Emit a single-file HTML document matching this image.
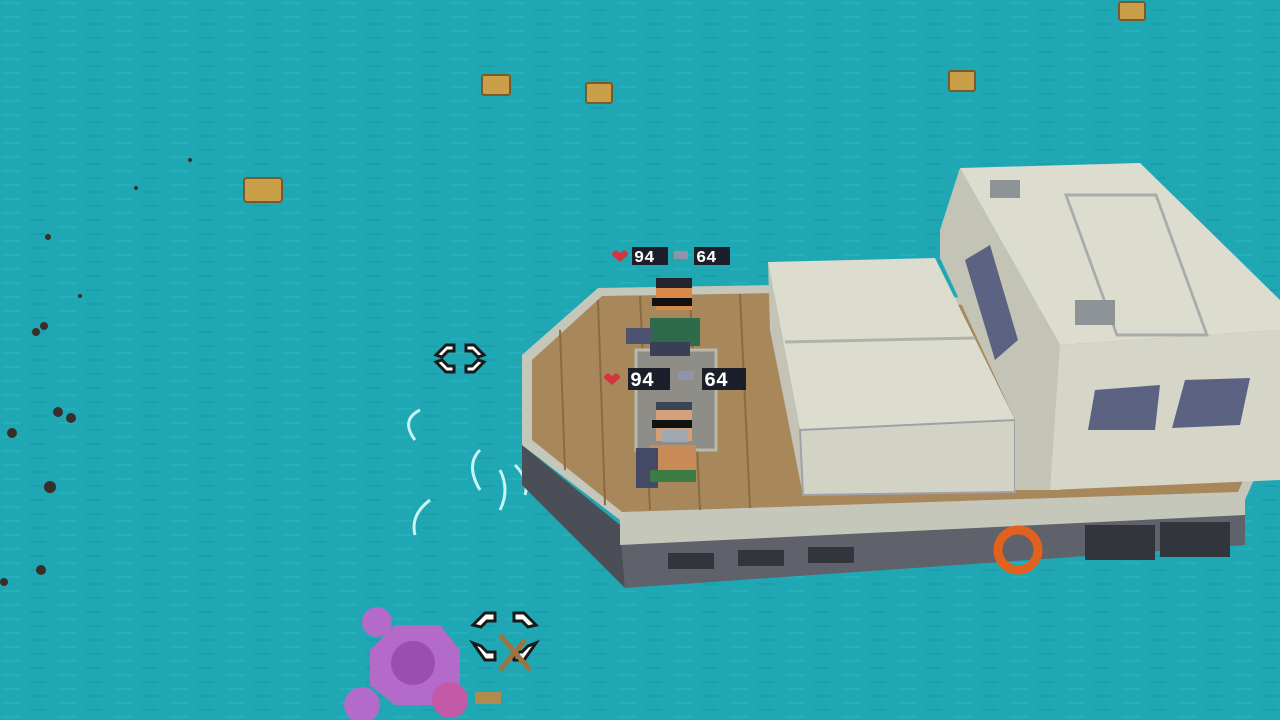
<!DOCTYPE html>
<html><head><meta charset="utf-8"><style>
html,body{margin:0;padding:0;width:1280px;height:720px;overflow:hidden;background:#1ea7b3}
svg{display:block}
text{font-family:"Liberation Mono",monospace;font-weight:bold}
</style></head><body>
<svg width="1280" height="720" viewBox="0 0 1280 720" xmlns="http://www.w3.org/2000/svg">
<defs>
<pattern id="w" width="56" height="14" patternUnits="userSpaceOnUse">
<rect width="56" height="14" fill="#1fa8b4"/>
<rect x="2" y="2" width="18" height="2" fill="#24afba"/>
<rect x="30" y="9" width="16" height="2" fill="#1b9fad"/>
</pattern>
</defs>
<rect width="1280" height="720" fill="url(#w)"/>
<g fill="#c9a049" stroke="#7a5a2a" stroke-width="2">
<rect x="244" y="178" width="38" height="24" rx="3"/>
<rect x="482" y="75" width="28" height="20" rx="2"/>
<rect x="586" y="83" width="26" height="20" rx="2"/>
<rect x="949" y="71" width="26" height="20" rx="2"/>
<rect x="1119" y="2" width="26" height="18" rx="2"/>
</g>
<g fill="#3a2e2a">
<circle cx="12" cy="433" r="5"/><circle cx="50" cy="487" r="6"/><circle cx="41" cy="570" r="5"/><circle cx="4" cy="582" r="4"/>
<circle cx="58" cy="412" r="5"/><circle cx="71" cy="418" r="5"/><circle cx="36" cy="332" r="4"/><circle cx="44" cy="326" r="4"/>
<circle cx="48" cy="237" r="3"/><circle cx="80" cy="296" r="2"/><circle cx="190" cy="160" r="2"/><circle cx="136" cy="188" r="2"/>
</g>
<g fill="none" stroke="#c8f4f6" stroke-width="3">
<path d="M420 410 q-20 10 -5 30"/><path d="M480 450 q-15 15 0 40"/><path d="M430 500 q-20 15 -15 35"/>
<path d="M500 470 q10 20 0 40"/><path d="M515 465 q15 15 10 30"/>
</g>
<polygon points="522,445 620,525 625,588 522,485" fill="#4c4e57"/>
<polygon points="620,525 1245,500 1245,545 625,588" fill="#5f616b"/>
<polygon points="620,518 1245,495 1245,515 620,545" fill="#c6c7bb"/>
<g fill="#33353d"><rect x="668" y="553" width="46" height="16"/><rect x="738" y="550" width="46" height="16"/><rect x="808" y="547" width="46" height="16"/>
<rect x="1085" y="525" width="70" height="35"/><rect x="1160" y="522" width="70" height="35"/></g>
<circle cx="1018" cy="550" r="20" fill="none" stroke="#e0621e" stroke-width="9"/>
<polygon points="522,355 598,288 780,285 1280,320 1280,420 1245,500 620,520 522,445" fill="#c6c7bb"/>
<polygon points="532,360 602,296 780,293 1272,325 1272,415 1238,492 622,512 532,440" fill="#a8875a"/>
<g stroke="#8a6a42" stroke-width="2"><line x1="560" y1="330" x2="565" y2="470"/><line x1="598" y1="300" x2="605" y2="505"/><line x1="640" y1="296" x2="650" y2="510"/><line x1="690" y1="295" x2="700" y2="510"/><line x1="740" y1="294" x2="750" y2="508"/></g>
<rect x="636" y="350" width="80" height="100" fill="#8e8d88" stroke="#b9b8ad" stroke-width="3"/>
<polygon points="768,262 935,258 1015,420 800,430" fill="#dcdccf"/>
<polygon points="768,262 800,430 803,495 770,330" fill="#c3c4b6"/>
<polygon points="800,430 1015,420 1015,492 803,495" fill="#d3d3c5" stroke="#9ea2a8" stroke-width="2"/>
<line x1="785" y1="342" x2="975" y2="338" stroke="#b0b2aa" stroke-width="3"/>
<polygon points="960,168 1140,163 1280,300 1280,330 1060,345" fill="#dcdccf"/>
<polygon points="940,230 960,168 1060,345 1060,490 1015,490 1015,420 940,258" fill="#c3c4b6"/>
<polygon points="1060,345 1280,330 1280,480 1050,490" fill="#d6d6c8"/>
<rect x="1070" y="195" width="90" height="140" fill="none" stroke="#a9acab" stroke-width="3" transform="skewX(20) translate(-75 0)"/>
<rect x="990" y="180" width="30" height="18" fill="#8d9396"/>
<rect x="1075" y="300" width="40" height="25" fill="#8d9396"/>
<polygon points="965,260 990,245 1018,340 995,360" fill="#5c6382"/>
<polygon points="1095,390 1160,385 1155,430 1088,430" fill="#5c6382"/>
<polygon points="1185,380 1250,378 1240,425 1172,428" fill="#5c6382"/>
<g><rect x="656" y="280" width="36" height="30" fill="#d98a4a"/><rect x="656" y="278" width="36" height="10" fill="#22252e"/><rect x="652" y="298" width="40" height="8" fill="#111"/>
<rect x="650" y="318" width="50" height="28" fill="#2e6b4c"/><rect x="626" y="328" width="26" height="16" fill="#4e5470"/><rect x="650" y="342" width="40" height="14" fill="#3b3f55"/></g>
<g><rect x="656" y="403" width="36" height="38" fill="#d4a07c"/><rect x="656" y="402" width="36" height="8" fill="#3b4456"/><rect x="652" y="420" width="40" height="8" fill="#111"/>
<rect x="662" y="430" width="26" height="12" fill="#9fa7b0"/><rect x="650" y="445" width="46" height="30" fill="#c88a56"/><rect x="636" y="448" width="22" height="40" fill="#444a66"/><rect x="650" y="470" width="46" height="12" fill="#3e7a44"/></g>
<g>
<path d="M612 253 l4 -3 4 3 4 -3 4 3 v2 l-8 7 -8 -7z" fill="#d23640"/>
<rect x="632" y="247" width="36" height="18" fill="#1c1f2a"/><text x="634" y="262" font-size="17" fill="#fff">94</text>
<rect x="674" y="251" width="14" height="8" fill="#8e95a8"/>
<rect x="694" y="247" width="36" height="18" fill="#1c1f2a"/><text x="696" y="262" font-size="17" fill="#fff">64</text>
<path d="M604 376 l4 -3 4 3 4 -3 4 3 v2 l-8 7 -8 -7z" fill="#d23640"/>
<rect x="628" y="368" width="42" height="22" fill="#1c1f2a"/><text x="630" y="386" font-size="20" fill="#fff">94</text>
<rect x="678" y="371" width="16" height="9" fill="#8e95a8"/>
<rect x="702" y="368" width="44" height="22" fill="#1c1f2a"/><text x="704" y="386" font-size="20" fill="#fff">64</text>
</g>
<g fill="#fff" stroke="#1a1a1a" stroke-width="3">
<path d="M436 355 l10 -10 h8 v6 h-6 l-6 6z"/><path d="M484 355 l-10 -10 h-8 v6 h6 l6 6z"/>
<path d="M436 362 l10 10 h8 v-6 h-6 l-6 -6z"/><path d="M484 362 l-10 10 h-8 v-6 h6 l6 -6z"/>
<path d="M473 625 l12 -12 h10 v8 h-8 l-6 6z"/><path d="M536 625 l-12 -12 h-10 v8 h8 l6 6z"/>
<path d="M473 643 l12 17 h10 v-8 h-8 l-6 -6z"/><path d="M536 643 l-12 17 h-10 v-8 h8 l6 -6z"/>
</g>
<g>
<circle cx="377" cy="622" r="15" fill="#b46ac8"/>
<polygon points="370,650 395,625 440,625 460,650 460,685 435,705 395,705 370,685" fill="#b46ac8"/>
<circle cx="413" cy="663" r="22" fill="#9a4fb0"/>
<circle cx="362" cy="705" r="18" fill="#b46ac8"/>
<circle cx="450" cy="700" r="18" fill="#c35aa5"/>
<rect x="475" y="692" width="26" height="12" fill="#b08a4e"/>
<path d="M500 635 l30 35 M525 640 l-25 30" stroke="#9b7444" stroke-width="5"/>
</g>
</svg>
</body></html>
